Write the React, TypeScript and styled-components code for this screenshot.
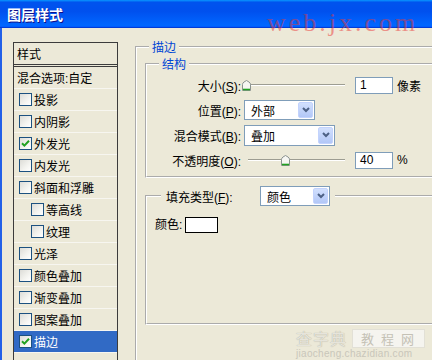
import styled, { createGlobalStyle } from "styled-components";

const GlobalStyle = createGlobalStyle`
  html, body {
    margin: 0;
    padding: 0;
  }
  body {
    background: #ece9d8;
    font-family: "Liberation Sans", "Noto Sans CJK SC", sans-serif;
    font-size: 12px;
    color: #000;
  }
`;

const Window = styled.div`
  position: relative;
  width: 432px;
  height: 360px;
  overflow: hidden;
  display: flex;
  flex-direction: column;
`;

const TitleBar = styled.div`
  height: 28px;
  flex-shrink: 0;
  display: flex;
  align-items: center;
  padding-left: 7px;
  background: linear-gradient(
    to bottom,
    #0997ff 0%,
    #0053ee 8%,
    #0050ee 40%,
    #0066ff 88%,
    #0066ff 93%,
    #005bff 95%,
    #003dd7 96%,
    #003dd7 100%
  );
  color: #fff;
  font-family: "Noto Sans CJK SC", sans-serif;
  font-size: 14px;
  font-weight: bold;
  text-shadow: 1px 1px #0f1089;
`;

const Body = styled.div`
  flex: 1;
  min-height: 0;
  display: flex;
  align-items: flex-start;
  gap: 17px;
  padding: 14px 0 0 11px;
  border-left: 2px solid #2260e8;
  background: #ece9d8;
  overflow: hidden;
`;

/* ---- left list of effects ---- */

const StylePanel = styled.div`
  width: 105px;
  height: 330px;
  flex-shrink: 0;
  box-sizing: border-box;
  border: 1px solid #3c3c3c;
`;

const PanelHeader = styled.div`
  height: 21px;
  display: flex;
  align-items: center;
  padding-left: 3px;
  border-bottom: 3px double #3c3c3c;
`;

const Row = styled.div<{ $indent?: boolean; $selected?: boolean }>`
  height: 21px;
  display: flex;
  align-items: center;
  gap: 2px;
  padding-left: ${(p) => (p.$indent ? 17 : 5)}px;
  border-bottom: 1px solid #f7f6f0;
  background: ${(p) => (p.$selected ? "#316ac5" : "transparent")};
  color: ${(p) => (p.$selected ? "#fff" : "#000")};
  white-space: nowrap;
`;

const BlendRow = styled(Row)`
  padding-left: 3px;
`;

const Box = styled.span`
  width: 13px;
  height: 13px;
  box-sizing: border-box;
  flex-shrink: 0;
  border: 1px solid #1c5180;
  background: linear-gradient(135deg, #dcdcd7 0%, #f4f4f0 60%, #fff 100%);
  display: flex;
  align-items: center;
  justify-content: center;
`;

const Check = ({ checked }: { checked?: boolean }) => (
  <Box>
    {checked ? (
      <svg width="11" height="11" viewBox="0 0 11 11">
        <path d="M2 5.2 L4.4 7.6 L9 2.8" fill="none" stroke="#21a121" strokeWidth="2" />
      </svg>
    ) : null}
  </Box>
);

/* ---- group boxes ---- */

const Group = styled.fieldset<{ $width: number; $height?: number; $top?: number }>`
  margin: ${(p) => p.$top ?? 0}px 0 0;
  padding: 0;
  width: ${(p) => p.$width}px;
  min-width: 0;
  ${(p) => (p.$height ? `height: ${p.$height}px;` : "")}
  box-sizing: border-box;
  flex-shrink: 0;
  border: 2px groove #fff;
`;

const GroupTitle = styled.legend`
  margin-left: 12px;
  padding: 0 3px;
  line-height: 14px;
  color: #0046d5;
  font-family: "Noto Sans CJK SC", sans-serif;
`;

const Inner = styled.div`
  padding-left: 8px;
`;

const FormGrid = styled.div`
  display: grid;
  grid-template-columns: 94px auto;
  grid-auto-rows: 22px;
  column-gap: 3px;
  row-gap: 3px;
  align-items: center;
  padding: 3px 0 5px;
`;

const FieldLabel = styled.span`
  text-align: right;
  white-space: nowrap;
`;

const Controls = styled.div`
  display: flex;
  align-items: center;
`;

const Unit = styled.span`
  margin-left: 4px;
`;

const NumberBox = styled.div`
  width: 38px;
  height: 17px;
  margin-left: 6px;
  box-sizing: border-box;
  border: 1px solid #7f9db9;
  background: #fff;
  padding-left: 4px;
  line-height: 15px;
`;

const SelectFrame = styled.div<{ $width: number; $height: number }>`
  width: ${(p) => p.$width}px;
  height: ${(p) => p.$height}px;
  box-sizing: border-box;
  border: 1px solid #7f9db9;
  background: #fff;
  display: flex;
  align-items: stretch;
`;

const SelectValue = styled.span`
  flex: 1;
  display: flex;
  align-items: center;
  padding-left: 6px;
`;

const SelectButton = styled.span`
  width: 15px;
  margin: 1px;
  box-sizing: border-box;
  border: 1px solid #c3d3fd;
  border-radius: 2px;
  background: linear-gradient(to bottom, #d2e0fd, #b2c7f7);
  display: flex;
  align-items: center;
  justify-content: center;
`;

const Select = ({ value, width, height = 20 }: { value: string; width: number; height?: number }) => (
  <SelectFrame $width={width} $height={height}>
    <SelectValue>{value}</SelectValue>
    <SelectButton>
      <svg width="8" height="6" viewBox="0 0 8 6">
        <path d="M1 1 L4 4 L7 1" fill="none" stroke="#4d6185" strokeWidth="2" />
      </svg>
    </SelectButton>
  </SelectFrame>
);

const SliderBox = styled.div`
  position: relative;
  width: 105px;
  height: 13px;
  box-sizing: border-box;
  padding: 0 4px;
  display: flex;
  align-items: center;
`;

const Track = styled.div`
  flex: 1;
  height: 0;
  border-top: 1px solid #9d9d92;
  border-bottom: 1px solid #fff;
`;

const Thumb = styled.svg`
  position: absolute;
  top: 1px;
`;

const Slider = ({ value }: { value: number }) => (
  <SliderBox>
    <Track />
    <Thumb width="9" height="11" viewBox="0 0 9 11" style={{ left: 2 + value * 99 - 4.5 }}>
      <path
        d="M0.5 10.5 V4.5 Q0.5 3 2 2 L4.5 0.5 L7 2 Q8.5 3 8.5 4.5 V10.5 Z"
        fill="#f6f6f2"
        stroke="#8a928f"
      />
      <path d="M1 9.5 H8" stroke="#21a121" strokeWidth="1.6" />
    </Thumb>
  </SliderBox>
);

const FillLegend = styled.legend`
  margin-left: 14px;
  padding: 0 5px;
`;

const FillLine = styled.div`
  display: flex;
  align-items: center;
`;

const FillLabel = styled.span`
  width: 94px;
  white-space: nowrap;
`;

const ColorRow = styled.div`
  height: 117px;
  box-sizing: border-box;
  padding: 11px 0 0 8px;
  display: flex;
  align-items: flex-start;
  gap: 3px;
  line-height: 16px;
`;

const Swatch = styled.div`
  width: 33px;
  height: 16px;
  box-sizing: border-box;
  border: 1px solid #000;
  background: #fff;
`;

/* ---- watermarks over the screenshot ---- */

const SiteMark = styled.div`
  position: absolute;
  left: 267px;
  top: 8px;
  font-family: "Liberation Serif", serif;
  font-size: 26px;
  line-height: 30px;
  letter-spacing: 3px;
  color: rgba(235, 55, 55, 0.5);
  pointer-events: none;
`;

const Brand = styled.div`
  position: absolute;
  left: 296px;
  top: 328px;
  display: flex;
  flex-direction: column;
  pointer-events: none;
  font-family: "Noto Sans CJK SC", sans-serif;
`;

const BrandTop = styled.div`
  display: flex;
  align-items: center;
  gap: 5px;
  height: 20px;
`;

const BrandName = styled.span`
  font-size: 16px;
  letter-spacing: 1px;
  color: #e6e4db;
  text-shadow: 0 0 1px #a29f93;
`;

const BrandTag = styled.span`
  padding: 0 3px 0 8px;
  font-size: 13px;
  line-height: 17px;
  letter-spacing: 7px;
  color: #c4c1b5;
  background: #f5f4ef;
  border: 1px solid #e2e0d6;
`;

const BrandUrl = styled.span`
  font-family: "Liberation Sans", sans-serif;
  font-size: 10px;
  line-height: 12px;
  letter-spacing: 0.3px;
  color: #c9c6ba;
`;

const effects = [
  { name: "投影" },
  { name: "内阴影" },
  { name: "外发光", checked: true },
  { name: "内发光" },
  { name: "斜面和浮雕" },
  { name: "等高线", sub: true },
  { name: "纹理", sub: true },
  { name: "光泽" },
  { name: "颜色叠加" },
  { name: "渐变叠加" },
  { name: "图案叠加" },
  { name: "描边", checked: true, selected: true },
];

export default function App() {
  return (
    <>
      <GlobalStyle />
      <Window>
        <TitleBar>图层样式</TitleBar>
        <Body>
          <StylePanel>
            <PanelHeader>样式</PanelHeader>
            <BlendRow>混合选项:自定</BlendRow>
            {effects.map((e) => (
              <Row key={e.name} $indent={e.sub} $selected={e.selected}>
                <Check checked={e.checked} />
                {e.name}
              </Row>
            ))}
          </StylePanel>

          <Group $width={320} $height={340} $top={-2}>
            <GroupTitle>描边</GroupTitle>
            <Inner>
              <Group $width={308} $top={3}>
                <GroupTitle>结构</GroupTitle>
                <FormGrid>
                  <FieldLabel>
                    大小(<u>S</u>):
                  </FieldLabel>
                  <Controls>
                    <Slider value={0} />
                    <NumberBox>1</NumberBox>
                    <Unit>像素</Unit>
                  </Controls>
                  <FieldLabel>
                    位置(<u>P</u>):
                  </FieldLabel>
                  <Controls>
                    <Select value="外部" width={71} />
                  </Controls>
                  <FieldLabel>
                    混合模式(<u>B</u>):
                  </FieldLabel>
                  <Controls>
                    <Select value="叠加" width={91} height={21} />
                  </Controls>
                  <FieldLabel>
                    不透明度(<u>O</u>):
                  </FieldLabel>
                  <Controls>
                    <Slider value={0.4} />
                    <NumberBox>40</NumberBox>
                    <Unit>%</Unit>
                  </Controls>
                </FormGrid>
              </Group>

              <Group $width={308} $top={8}>
                <FillLegend>
                  <FillLine>
                    <FillLabel>
                      填充类型(<u>F</u>):
                    </FillLabel>
                    <Select value="颜色" width={70} />
                  </FillLine>
                </FillLegend>
                <ColorRow>
                  颜色:
                  <Swatch />
                </ColorRow>
              </Group>
            </Inner>
          </Group>
        </Body>

        <SiteMark>web.jx.com</SiteMark>
        <Brand>
          <BrandTop>
            <BrandName>查字典</BrandName>
            <BrandTag>教程网</BrandTag>
          </BrandTop>
          <BrandUrl>jiaocheng.chazidian.com</BrandUrl>
        </Brand>
      </Window>
    </>
  );
}
